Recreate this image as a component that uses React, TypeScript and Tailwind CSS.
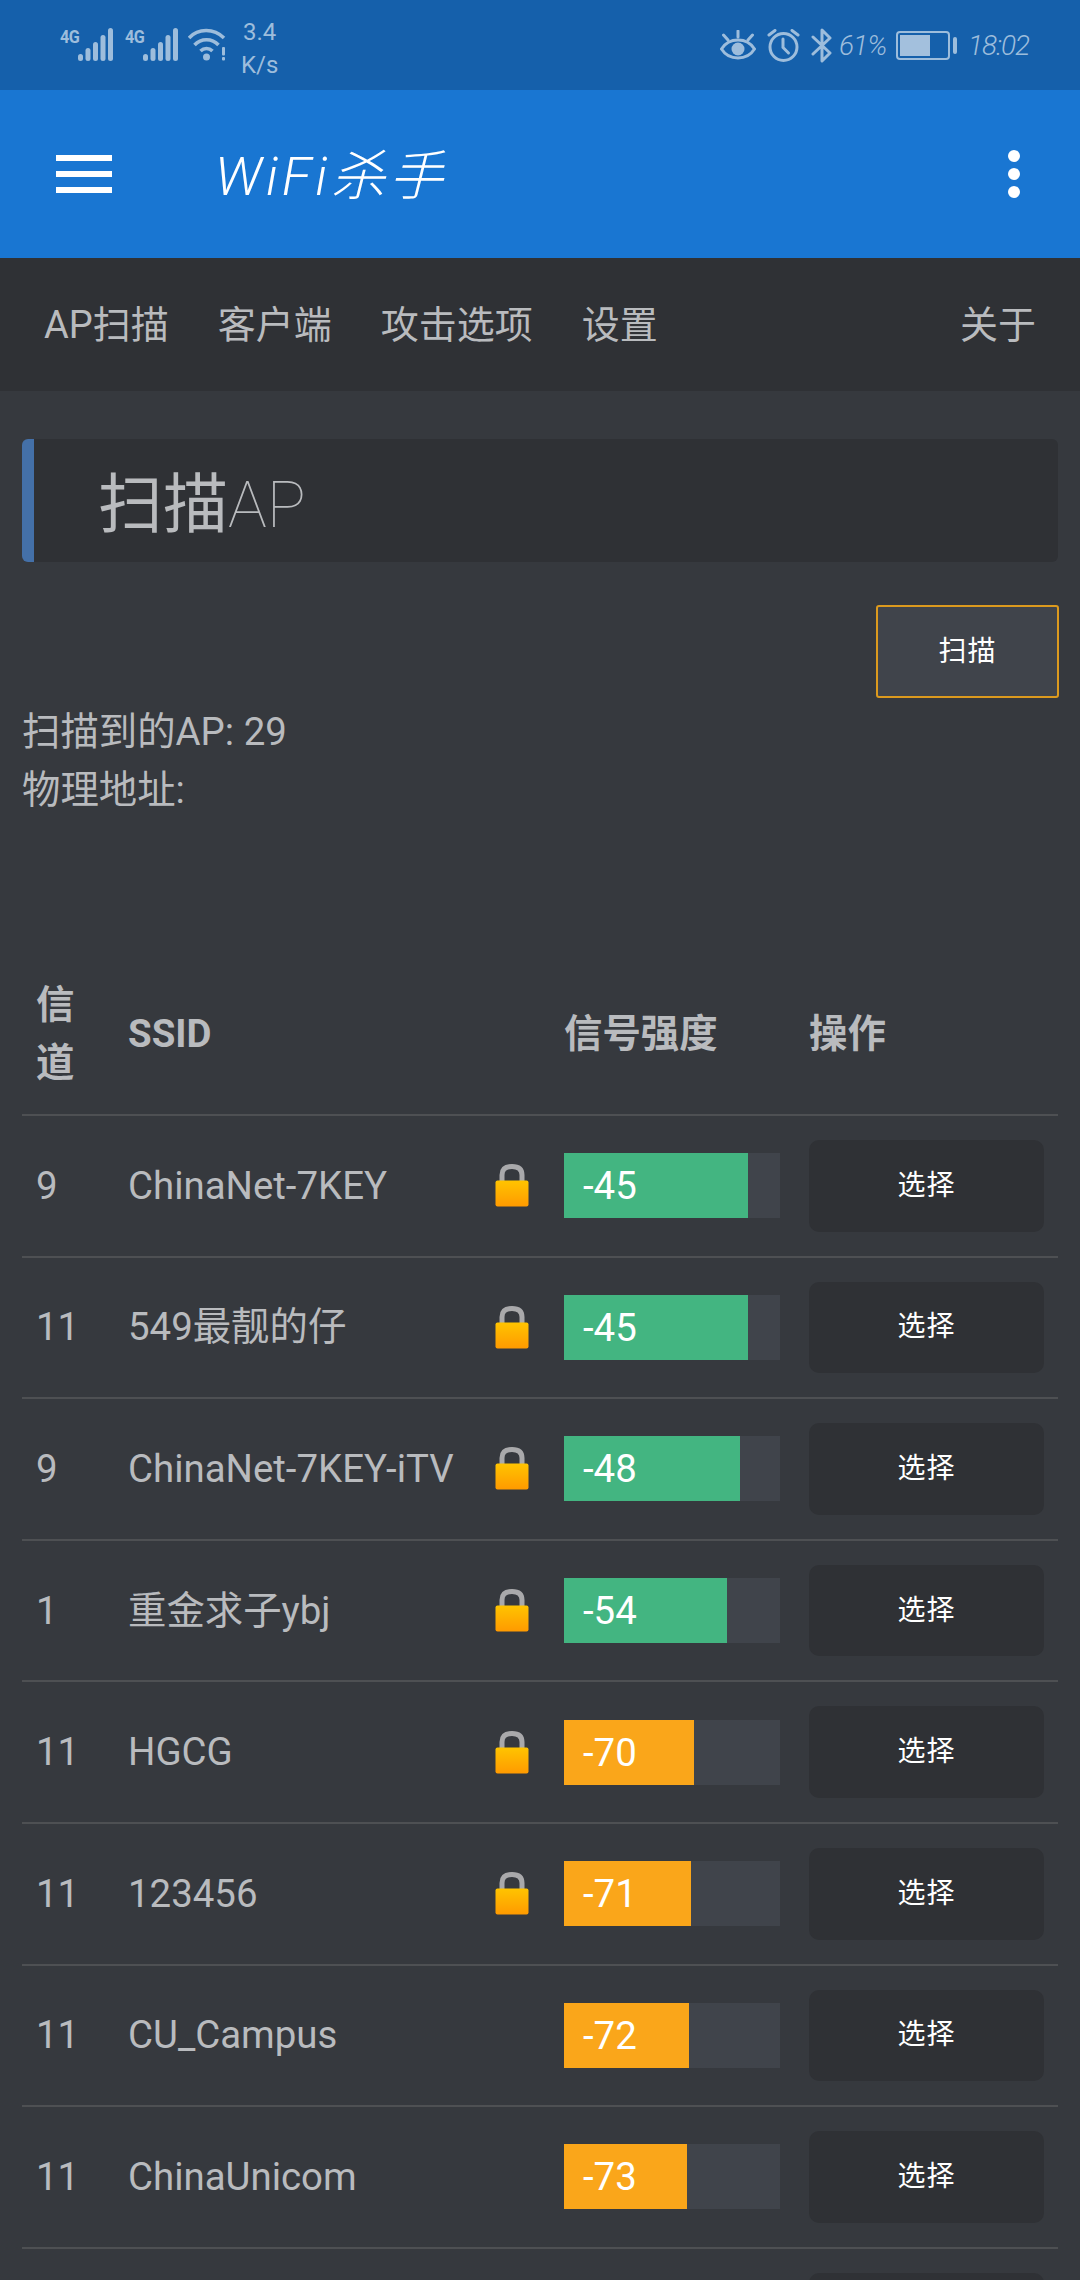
import React from 'react';

const ROWS = [
  { channel: '9', ssid: 'ChinaNet-7KEY', locked: true, signal: -45, width: 85.2 },
  { channel: '11', ssid: '549最靓的仔', locked: true, signal: -45, width: 85.2 },
  { channel: '9', ssid: 'ChinaNet-7KEY-iTV', locked: true, signal: -48, width: 81.5 },
  { channel: '1', ssid: '重金求子ybj', locked: true, signal: -54, width: 75.3 },
  { channel: '11', ssid: 'HGCG', locked: true, signal: -70, width: 60 },
  { channel: '11', ssid: '123456', locked: true, signal: -71, width: 58.6 },
  { channel: '11', ssid: 'CU_Campus', locked: false, signal: -72, width: 57.9 },
  { channel: '11', ssid: 'ChinaUnicom', locked: false, signal: -73, width: 57 },
];

const GRID = 'grid grid-cols-[91px_359px_77px_244px_1fr] items-center';

function Cellular() {
  return (
    <div className="flex items-start w-[53px] h-[33px] relative">
      <span className="font-['Roboto'] font-bold text-[18px] leading-[17px] tracking-[-0.5px] scale-x-90 origin-left">4G</span>
      <svg width="35" height="33" viewBox="0 0 35 33" className="absolute left-[18px] top-0" fill="currentColor">
        <rect x="0" y="26" width="5" height="7" rx="2.5" />
        <rect x="7.5" y="20" width="5" height="13" rx="2.5" />
        <rect x="15" y="14" width="5" height="19" rx="2.5" />
        <rect x="22.5" y="7" width="5" height="26" rx="2.5" />
        <rect x="30" y="0" width="5" height="33" rx="2.5" />
      </svg>
    </div>
  );
}

function Wifi() {
  return (
    <svg width="38" height="33" viewBox="0 0 38 33" fill="none" stroke="currentColor" strokeWidth="3.5" className="ml-[-2px]">
      <path d="M1 10 C10 0 26 0 36 10" />
      <path d="M6.5 17 C13 10 24 10 30.5 17" />
      <path d="M12.5 23 C16 19.5 21 19.5 24.5 23" />
      <circle cx="18.5" cy="29" r="3.5" fill="currentColor" stroke="none" />
      <rect x="34" y="19" width="3" height="8.5" rx="1" fill="currentColor" stroke="none" />
      <rect x="34" y="29" width="3" height="3.5" rx="1" fill="currentColor" stroke="none" />
    </svg>
  );
}

function EyeIcon() {
  return (
    <svg width="36" height="32" viewBox="0 0 36 32" fill="none" stroke="currentColor" strokeWidth="3" strokeLinecap="round">
      <path d="M1.5 19 C9 7 27 7 34.5 19 C27 31 9 31 1.5 19 Z" />
      <circle cx="18" cy="19" r="6.5" fill="currentColor" stroke="none" />
      <path d="M18 1 V7 M3.5 5 L8 10 M32.5 5 L28 10" />
    </svg>
  );
}

function AlarmIcon() {
  return (
    <svg width="33" height="33" viewBox="0 0 33 33" fill="none" stroke="currentColor" strokeWidth="3" strokeLinecap="round">
      <circle cx="16.5" cy="18" r="13.5" />
      <path d="M16 10 V18.5 L21.5 24" />
      <path d="M2 6 L8 1.5 M31 6 L25 1.5" />
    </svg>
  );
}

function BluetoothIcon() {
  return (
    <svg width="21" height="35" viewBox="0 0 21 35" fill="none" stroke="currentColor" strokeWidth="3" strokeLinecap="round" strokeLinejoin="round">
      <path d="M2 9 L19 25 L11 33 V2 L19 10 L2 26" />
    </svg>
  );
}

function BatteryIcon() {
  return (
    <div className="flex items-center gap-[3px] w-[61px]">
      <div className="w-[54px] h-[29px] rounded-[4px] border-2 border-[#9dbddc] p-[2px]">
        <div className="h-full w-[65%] bg-[#a3c0dd]" />
      </div>
      <div className="w-[4px] h-[17px] rounded-[2px] bg-[#9dbddc]" />
    </div>
  );
}

function LockIcon() {
  return (
    <svg width="34" height="43" viewBox="0 0 34 43" className="block">
      <defs>
        <linearGradient id="lockBody" x1="0" y1="0" x2="0" y2="1">
          <stop offset="0" stopColor="#ffc400" />
          <stop offset="1" stopColor="#ff9a00" />
        </linearGradient>
      </defs>
      <path d="M7 17 V11 C7 5 11 2.5 17 2.5 C23 2.5 27 5 27 11 V17" fill="none" stroke="#a9a9ab" strokeWidth="5" />
      <rect x="0.5" y="16.5" width="33" height="26" rx="2" fill="url(#lockBody)" />
    </svg>
  );
}

function ApRow({ channel, ssid, locked, signal, width }: { channel: string; ssid: string; locked: boolean; signal: number; width: number }) {
  const color = signal > -60 ? 'bg-[#43b581]' : 'bg-[#faa61a]';
  return (
    <div className={`${GRID} border-t-2 border-[#4e5053] py-[24px]`}>
      <div className="px-[14px]">{channel}</div>
      <div className="px-[15px] whitespace-nowrap">{ssid}</div>
      <div className="pl-[23px]">{locked && <LockIcon />}</div>
      <div className="pl-[15px] pr-[13px]">
        <div className="h-[65px] bg-[#40444b]">
          <div className={`h-full ${color} pl-[19px] text-white leading-[65px]`} style={{ width: `${width}%` }}>
            {signal}
          </div>
        </div>
      </div>
      <div className="pl-[16px] pr-[14px]">
        <button className="w-full h-[91.6px] rounded-[10px] bg-[#2f3135] text-white text-[28px] tracking-[1px]">选择</button>
      </div>
    </div>
  );
}

export default function App() {
  return (
    <div className="h-[2280px] overflow-hidden bg-[#36393e] font-[Roboto,'Noto_Sans_CJK_SC',sans-serif] text-[38.4px] leading-[58px] text-[#b9bbbe]">
      {/* status bar */}
      <div className="h-[90px] bg-[#1560ab] text-[#9dbddc] flex items-start pl-[60px] pr-[54px] pt-[28px]">
        <div className="flex items-start gap-[12px]">
          <Cellular />
          <Cellular />
          <Wifi />
        </div>
        <div className="ml-[15px] mt-[-12px] text-[24px] leading-[33px] text-center">
          3.4
          <br />
          K/s
        </div>
        <div className="ml-auto flex items-center gap-[11px] text-[28px] leading-[34px] font-light italic">
          <EyeIcon />
          <AlarmIcon />
          <BluetoothIcon />
          <span className="w-[46px] ml-[-4px] tracking-[-1px] whitespace-nowrap">61%</span>
          <BatteryIcon />
          <span className="w-[58px] whitespace-nowrap tracking-[-1px]">18:02</span>
        </div>
      </div>

      {/* app bar */}
      <div className="h-[168px] bg-[#1976d2] flex items-center pl-[56px] pr-[60px] text-white">
        <div className="flex flex-col gap-[10px] w-[56px]">
          <div className="h-[6px] bg-white" />
          <div className="h-[6px] bg-white" />
          <div className="h-[6px] bg-white" />
        </div>
        <div className="ml-[103px] mt-[5px] text-[54px] leading-[60px] font-light italic tracking-[4px]">WiFi杀手</div>
        <div className="ml-auto flex flex-col gap-[6px]">
          <div className="w-[12px] h-[12px] rounded-full bg-white" />
          <div className="w-[12px] h-[12px] rounded-full bg-white" />
          <div className="w-[12px] h-[12px] rounded-full bg-white" />
        </div>
      </div>

      {/* nav */}
      <div className="h-[133px] bg-[#2f3135] flex items-center gap-[49px] pl-[44px] pr-[44px] text-[38px]">
        <span>AP扫描</span>
        <span>客户端</span>
        <span>攻击选项</span>
        <span>设置</span>
        <span className="ml-auto">关于</span>
      </div>

      <div className="pl-[22px] pr-[21px]">
        <div className="mt-[48px] mr-[1px] h-[123px] rounded-[6px] bg-[#2f3135] border-l-[12px] border-[#4470a8] pl-[64px] pt-[8px] flex items-center text-[65px] leading-[80px]">
          扫描<span className="font-thin">AP</span>
        </div>

        <div className="mt-[43px] flex justify-end">
          <button className="w-[183px] h-[93px] border-2 border-[#dc9a1e] rounded-[3px] bg-[#40444b] text-white text-[28px] tracking-[1px]">扫描</button>
        </div>

        <div className="mt-[5px]">扫描到的AP: 29</div>
        <div>物理地址:</div>

        <div className="mt-[131px] mr-[1px]">
          <div className={`${GRID} font-bold pt-[26px] pb-[22px]`}>
            <div className="px-[14px]">信道</div>
            <div className="px-[15px]">SSID</div>
            <div />
            <div className="px-[15px]">信号强度</div>
            <div className="pl-[16px]">操作</div>
          </div>
          {ROWS.map((row, i) => (
            <ApRow key={i} {...row} />
          ))}
          {/* next row, only its button top shows above the fold */}
          <div className={`${GRID} border-t-2 border-[#4e5053] py-[24px]`}>
            <div />
            <div />
            <div />
            <div />
            <div className="pl-[16px] pr-[14px]">
              <div className="h-[91.6px] rounded-[10px] bg-[#2f3135]" />
            </div>
          </div>
        </div>
      </div>
    </div>
  );
}
